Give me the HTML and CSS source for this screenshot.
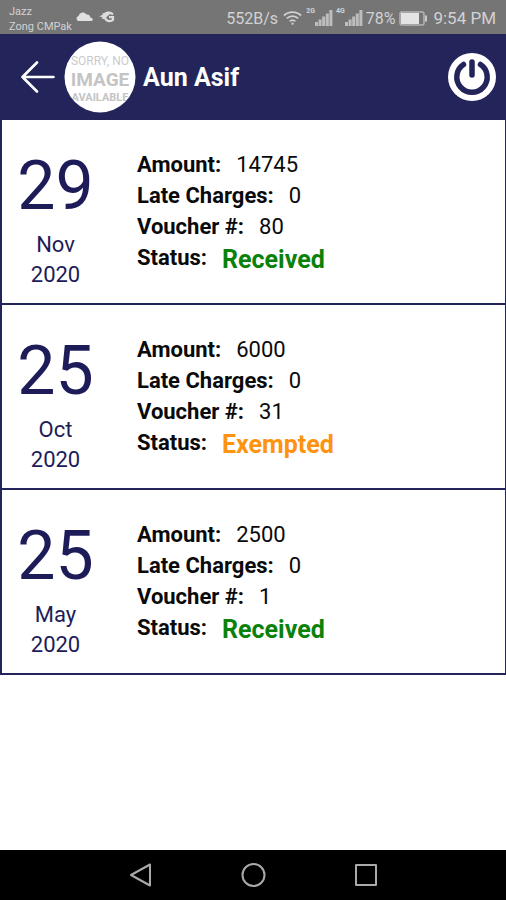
FILE: index.html
```html
<!DOCTYPE html>
<html lang="en">
<head>
<meta charset="utf-8">
<meta name="viewport" content="width=device-width, initial-scale=1">
<title>Aun Asif</title>
<link rel="stylesheet" href="styles.css">
</head>
<body>
<div class="statusbar">
  <div class="carriers"><span>Jazz</span><span>Zong CMPak</span></div>
  <svg class="notices" width="40" height="14" viewBox="0 0 40 14" aria-hidden="true">
    <path d="M2 11a2.6 2.6 0 0 1 .6-4.900A4.300 4.300 0 0 1 10.500 4.500a3.300 3.300 0 0 1 4 3.300A1.800 1.800 0 0 1 16 11z" fill="#e0e0e0"/>
    <path d="M36 2.500C33 1 30 1.500 28.500 3L26 3.500l1 1-4 2 3.500.5-1 1.500 2.500.5" fill="#dcdcdc"/>
    <path d="M37 4.300c-3-2.600-8-1.300-8 2.700s5.500 5.300 8 2.800V7.200h-4" fill="none" stroke="#dcdcdc" stroke-width="2.200"/>
  </svg>
  <div class="system">
    <span class="rate">552B/s</span>
    <svg class="wifi" width="19" height="16" viewBox="0 0 20 16" fill="none" stroke="#d2d2d2" stroke-width="1.800" aria-hidden="true">
      <path d="M1 5.500a13 13 0 0 1 18 0M4 8.500a8.700 8.700 0 0 1 12 0M7 11.500a4.500 4.500 0 0 1 6 0"/>
      <circle cx="10" cy="14" r="1.200" fill="#d2d2d2" stroke="none"/>
    </svg>
    <span class="net">2G</span>
    <svg class="signal" width="18" height="16" viewBox="0 0 18 16" fill="#bdbdbd" aria-hidden="true">
      <path d="M0 12h3v4H0zM3.600 9.500h3V16h-3zM7.200 6.500h3V16h-3zM10.800 3.500h3V16h-3zM14.400 0h3v16h-3z"/>
    </svg>
    <span class="net">4G</span>
    <svg class="signal" width="18" height="16" viewBox="0 0 18 16" fill="#bdbdbd" aria-hidden="true">
      <path d="M0 12h3v4H0zM3.600 9.500h3V16h-3zM7.200 6.500h3V16h-3zM10.800 3.500h3V16h-3zM14.400 0h3v16h-3z"/>
    </svg>
    <span class="percent">78%</span>
    <svg class="battery" width="29" height="15" viewBox="0 0 29 15" aria-hidden="true">
      <rect x="1" y="1" width="24" height="13" rx="2" fill="none" stroke="#b5b5b5" stroke-width="1.500"/>
      <rect x="2" y="2" width="18" height="11" fill="#e4e4e4"/>
      <path d="M27 4.500v6" stroke="#c8c8c8" stroke-width="2"/>
    </svg>
    <span class="clock">9:54 PM</span>
  </div>
</div>

<header class="appbar">
  <button class="icon-button" type="button" aria-label="Back">
    <svg width="34" height="32" viewBox="0 0 34 32" fill="none" stroke="#fff" stroke-width="2.600" stroke-linecap="round" stroke-linejoin="round">
      <path d="M32.500 16H1.500M16 1.500 1.500 16 16 30.500"/>
    </svg>
  </button>
  <svg class="avatar" width="72" height="72" viewBox="0 0 72 72">
    <clipPath id="disc"><circle cx="36" cy="36" r="35"/></clipPath>
    <circle cx="36" cy="36" r="35.500" fill="#fff"/>
    <g clip-path="url(#disc)" text-anchor="middle">
      <text class="avatar-light" x="36" y="24">SORRY, NO</text>
      <text class="avatar-strong" x="36" y="45">IMAGE</text>
      <text class="avatar-mid" x="36" y="60">AVAILABLE</text>
    </g>
  </svg>
  <h1 class="title">Aun Asif</h1>
  <button class="icon-button" type="button" aria-label="Log out">
    <svg width="48" height="48" viewBox="0 0 48 48">
      <circle cx="24" cy="24" r="24" fill="#fff"/>
      <path d="M15.500 11.500a15.200 15.200 0 1 0 17 0M24 9v13" fill="none" stroke="#23255a" stroke-width="5.500" stroke-linecap="round"/>
    </svg>
  </button>
</header>

<main class="vouchers">
  <article class="voucher">
    <div class="date"><span class="day">29</span><span>Nov</span><span>2020</span></div>
    <dl class="details">
      <div class="row"><dt>Amount:</dt><dd>14745</dd></div>
      <div class="row"><dt>Late Charges:</dt><dd>0</dd></div>
      <div class="row"><dt>Voucher #:</dt><dd>80</dd></div>
      <div class="row"><dt>Status:</dt><dd class="status received">Received</dd></div>
    </dl>
  </article>
  <article class="voucher">
    <div class="date"><span class="day">25</span><span>Oct</span><span>2020</span></div>
    <dl class="details">
      <div class="row"><dt>Amount:</dt><dd>6000</dd></div>
      <div class="row"><dt>Late Charges:</dt><dd>0</dd></div>
      <div class="row"><dt>Voucher #:</dt><dd>31</dd></div>
      <div class="row"><dt>Status:</dt><dd class="status exempted">Exempted</dd></div>
    </dl>
  </article>
  <article class="voucher">
    <div class="date"><span class="day">25</span><span>May</span><span>2020</span></div>
    <dl class="details">
      <div class="row"><dt>Amount:</dt><dd>2500</dd></div>
      <div class="row"><dt>Late Charges:</dt><dd>0</dd></div>
      <div class="row"><dt>Voucher #:</dt><dd>1</dd></div>
      <div class="row"><dt>Status:</dt><dd class="status received">Received</dd></div>
    </dl>
  </article>
</main>

<nav class="navbar" aria-label="System">
  <button class="icon-button" type="button" aria-label="Back">
    <svg width="24" height="26" viewBox="0 0 24 26" fill="none" stroke="#aaa" stroke-width="2" stroke-linejoin="round"><path d="M22 2.500v21L3 13z"/></svg>
  </button>
  <button class="icon-button" type="button" aria-label="Home">
    <svg width="26" height="26" viewBox="0 0 26 26" fill="none" stroke="#aaa" stroke-width="2"><circle cx="13.500" cy="13" r="11"/></svg>
  </button>
  <button class="icon-button" type="button" aria-label="Recent apps">
    <svg width="24" height="26" viewBox="0 0 24 26" fill="none" stroke="#aaa" stroke-width="2" stroke-linejoin="round"><path d="M2 3h20v20H2z"/></svg>
  </button>
</nav>
</body>
</html>
```
FILE: styles.css
```css
* {
  box-sizing: border-box;
}

body {
  margin: 0;
  min-height: 100vh;
  display: flex;
  flex-direction: column;
  background: #fff;
  color: #0a0a0a;
  font-family: Roboto, "Liberation Sans", sans-serif;
  font-size: 22px;
}

svg {
  display: block;
  flex: none;
}

.icon-button {
  padding: 0;
  border: 0;
  background: none;
  cursor: pointer;
}

.statusbar {
  display: flex;
  align-items: center;
  height: 34px;
  padding: 0 10px 0 9px;
  background: #757575;
  color: #d2d2d2;
  font-size: 16px;
}

.carriers {
  display: flex;
  flex-direction: column;
  padding-top: 3px;
  font-size: 11px;
  line-height: 15px;
}

.notices {
  margin-left: 4px;
}

.system {
  display: flex;
  align-items: center;
  margin-left: auto;
  padding-top: 2px;
  white-space: nowrap;
}

.clock {
  font-size: 17px;
}

.wifi {
  margin: 0 4px 0 5px;
}

.net {
  align-self: flex-start;
  font-size: 7px;
  font-weight: 700;
  line-height: 7px;
}

.signal {
  margin-right: 3px;
}

.battery {
  margin: 0 5px 0 4px;
}

.appbar {
  display: flex;
  align-items: center;
  height: 86px;
  padding: 0 10px 0 21px;
  background: #23255a;
  color: #fff;
}

.avatar {
  margin: 0 7px 0 9px;
}

.avatar-light {
  fill: #cbcbcb;
  font-size: 12px;
}

.avatar-strong {
  fill: #c4c4c4;
  font-size: 19px;
  font-weight: 700;
}

.avatar-mid {
  fill: #c4c4c4;
  font-size: 11px;
  font-weight: 700;
}

.title {
  flex: 1;
  margin: 0;
  padding-top: 1px;
  font-size: 25px;
  font-weight: 700;
}

.vouchers {
  flex: 1;
}

.voucher {
  display: flex;
  padding: 22px 0 13px;
  border: solid #23255a;
  border-width: 0 1px 2px 2px;
}

.date {
  display: flex;
  flex-direction: column;
  align-items: center;
  width: 107px;
  color: #1d1c59;
  line-height: 30px;
}

.day {
  font-size: 68px;
  line-height: 88px;
}

.details {
  flex: 1;
  margin: 7px 0 0 28px;
}

.row {
  display: flex;
  gap: 15px;
  height: 31px;
  line-height: 31px;
}

dt {
  font-weight: 700;
}

dd {
  margin: 0;
}

.status {
  padding-top: 2px;
  font-size: 25px;
  font-weight: 700;
}

.received {
  color: #0a820a;
}

.exempted {
  color: #ff920f;
}

.navbar {
  display: flex;
  justify-content: center;
  align-items: center;
  gap: 88px;
  height: 50px;
  background: #000;
}
```
